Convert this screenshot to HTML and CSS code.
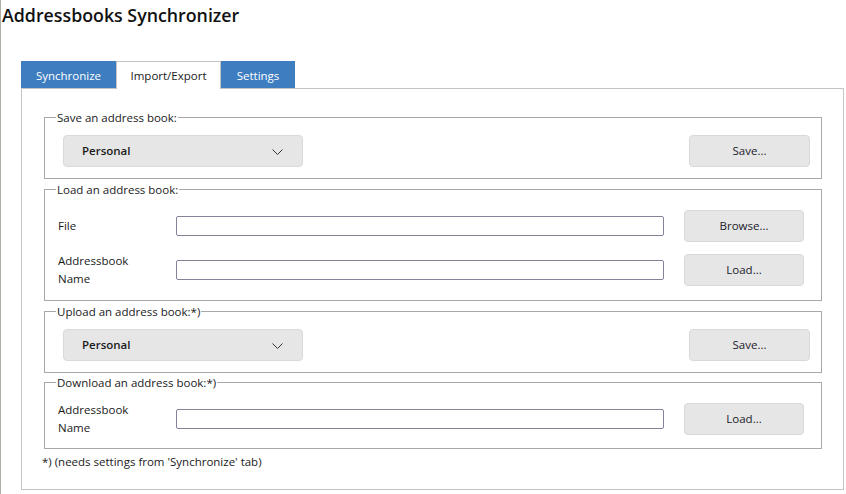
FILE: index.html
```html
<!DOCTYPE html>
<html>
<head>
<meta charset="utf-8">
<link rel="stylesheet" href="styles.css">
</head>
<body>
<div class="window">
  <h1 class="title">Addressbooks Synchronizer</h1>
  <div class="tabs">
    <div class="tab">Synchronize</div>
    <div class="tab active">Import/Export</div>
    <div class="tab tab-settings">Settings</div>
  </div>
  <div class="panel">
    <fieldset class="group group-combo">
      <legend>Save an address book:</legend>
      <div class="combo-row">
        <div class="combo"><span>Personal</span>
          <svg class="chev" width="11" height="6" viewBox="0 0 11 6"><path d="M0.5 0.5 L5.5 5.5 L10.5 0.5" fill="none" stroke="#333" stroke-width="1"/></svg>
        </div>
        <button class="btn btn-wide">Save...</button>
      </div>
    </fieldset>
    <fieldset class="group group-form g2">
      <legend>Load an address book:</legend>
      <div class="form-row">
        <label class="lbl">File</label>
        <div class="input"></div>
        <button class="btn">Browse...</button>
      </div>
      <div class="form-row">
        <label class="lbl">Addressbook<br>Name</label>
        <div class="input"></div>
        <button class="btn">Load...</button>
      </div>
    </fieldset>
    <fieldset class="group group-combo">
      <legend>Upload an address book:*)</legend>
      <div class="combo-row">
        <div class="combo"><span>Personal</span>
          <svg class="chev" width="11" height="6" viewBox="0 0 11 6"><path d="M0.5 0.5 L5.5 5.5 L10.5 0.5" fill="none" stroke="#333" stroke-width="1"/></svg>
        </div>
        <button class="btn btn-wide">Save...</button>
      </div>
    </fieldset>
    <fieldset class="group group-form g4">
      <legend>Download an address book:*)</legend>
      <div class="form-row">
        <label class="lbl">Addressbook<br>Name</label>
        <div class="input"></div>
        <button class="btn">Load...</button>
      </div>
    </fieldset>
    <p class="note">*) (needs settings from 'Synchronize' tab)</p>
  </div>
</div>
</body>
</html>
```
FILE: styles.css
```css
* { box-sizing: border-box; }
html, body { margin: 0; padding: 0; background: #fff; }
body {
  font-family: "Open Sans", "Noto Sans", sans-serif;
  font-size: 11.5px;
  color: #1a1a1a;
}
.window {
  height: 494px;
  border-left: 1px solid #b0b0a8;
  overflow: hidden;
}
.title {
  margin: 0;
  padding: 3px 0 0 1px;
  font-size: 17.8px;
  font-weight: 600;
  line-height: 24px;
  color: #111;
}
.tabs {
  display: flex;
  align-items: flex-start;
  margin: 34px 0 -1px 20px;
  position: relative;
  z-index: 1;
}
.tab {
  height: 27px;
  width: 95px;
  background: #3d7dc0;
  color: #fff;
  display: flex;
  align-items: center;
  justify-content: center;
  padding-top: 1px;
}
.tab.active {
  width: 105px;
  height: 28px;
  background: #fff;
  color: #1a1a1a;
  border: 1px solid #c4c4c4;
  border-bottom: none;
  padding-bottom: 1px;
}
.tab.tab-settings { width: 74px; }
.panel {
  width: 823px;
  height: 402px;
  margin-left: 20px;
  border: 1px solid #c4c4c4;
  padding: 21px 21px 0 22px;
  display: flex;
  flex-direction: column;
  gap: 3px;
}
.group {
  margin: 0;
  border: 1px solid #a8a8a8;
  min-width: 0;
}
.group legend {
  padding: 0 1px;
  line-height: 15px;
}
.group-combo { padding: 10px 11px 11px 18px; }
.group-combo legend { margin-left: -7px; }
.group-form { padding: 13px 17px 14px 13px; }
.group-form legend { margin-left: -2px; }
.group-form.g4 { padding-top: 13px; padding-bottom: 13px; margin-top: -1px; }
.combo-row {
  display: flex;
  justify-content: space-between;
  align-items: center;
}
.combo {
  width: 240px;
  height: 32px;
  background: #e6e6e6;
  border: 1px solid #dadada;
  border-radius: 4px;
  display: flex;
  align-items: center;
  justify-content: space-between;
  padding: 0 19px 1px 18px;
  font-weight: 600;
}
.chev { margin-top: 2px; }
.btn {
  width: 120px;
  height: 32px;
  background: #e6e6e6;
  border: 1px solid #d8d8d8;
  border-radius: 4px;
  font: inherit;
  color: #1a1a2a;
  padding: 0 0 1px;
}
.btn.btn-wide { width: 121px; }
.form-row {
  display: flex;
  align-items: center;
  height: 32px;
}
.form-row + .form-row { margin-top: 12px; }
.lbl {
  width: 118px;
  line-height: 18px;
  flex: none;
}
.input {
  flex: 1;
  height: 20px;
  border: 1px solid #83839a;
  border-radius: 2px;
  margin-right: 20px;
}
.note {
  margin: 2px 0 0 -2px;
  line-height: 16px;
}
```
